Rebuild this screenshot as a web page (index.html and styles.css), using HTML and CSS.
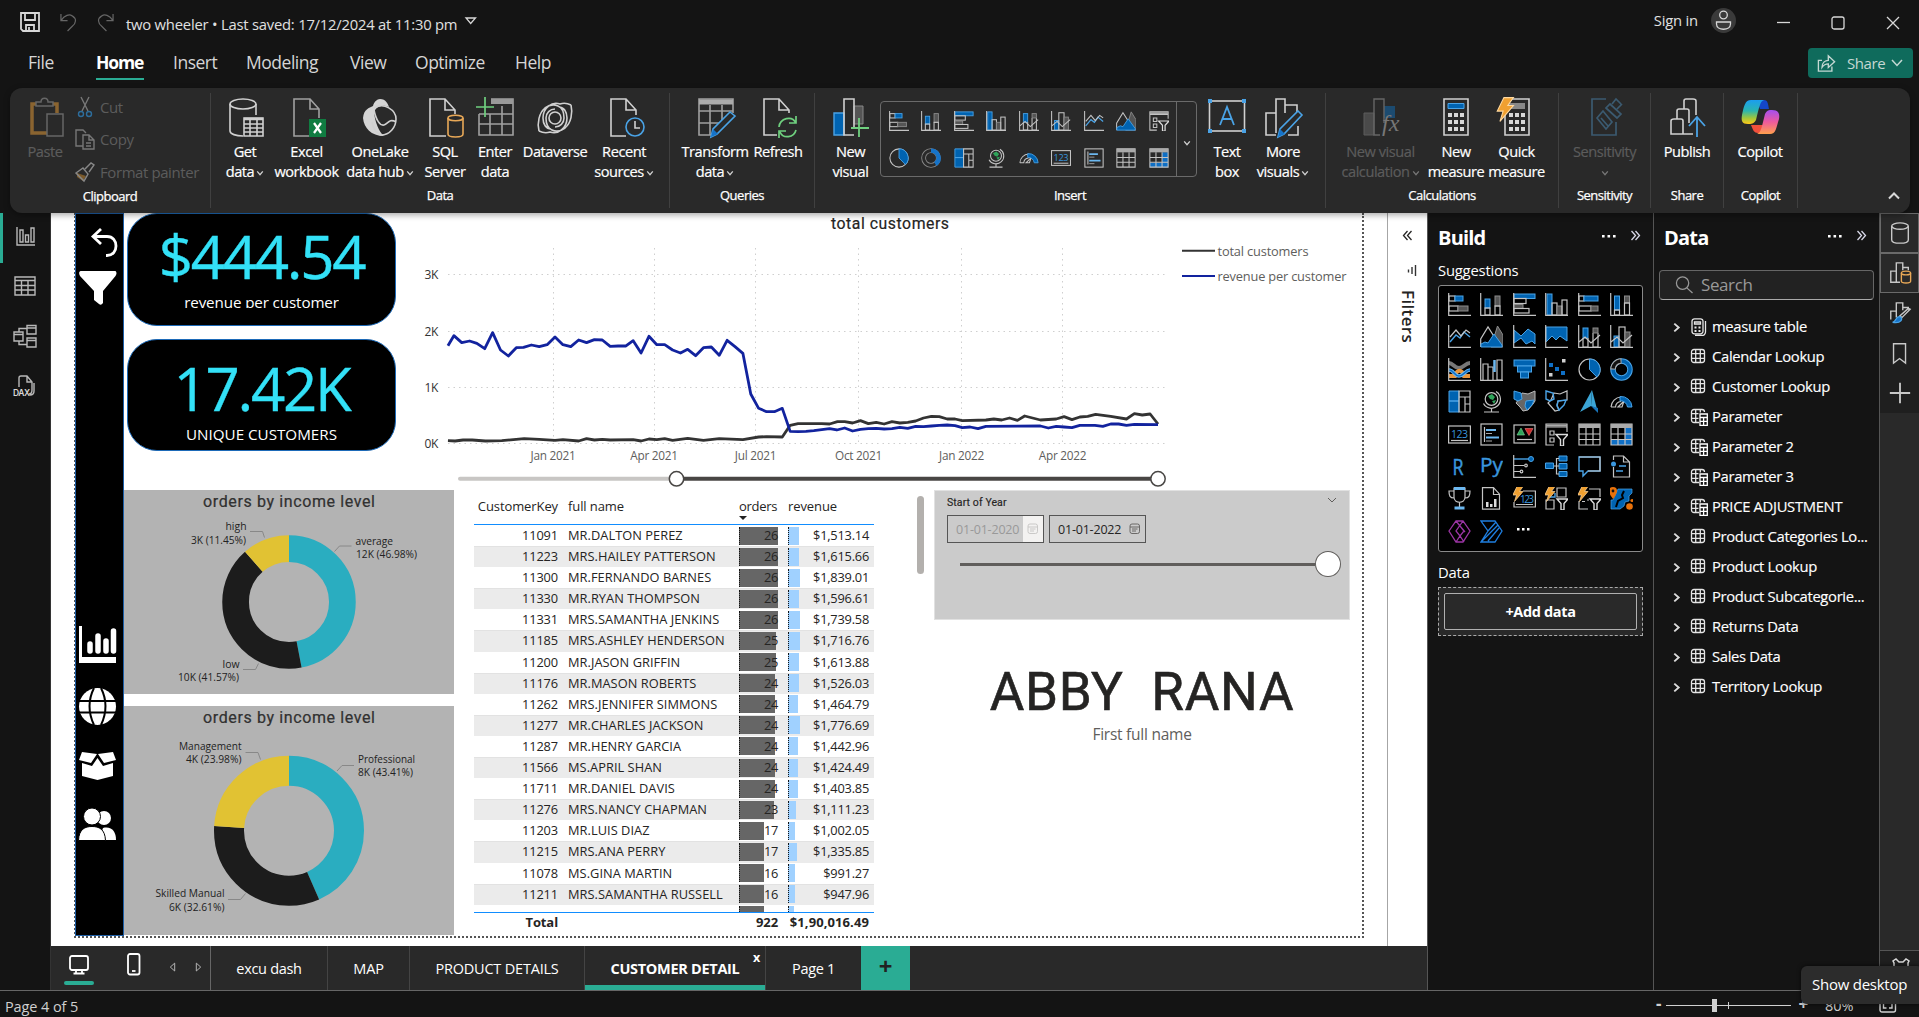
FILE: index.html
```html
<!DOCTYPE html>
<html lang="en">
<head>
<meta charset="utf-8">
<title>two wheeler</title>
<link rel="stylesheet" href="styles.css">
</head>
<body>
<svg class="defs" aria-hidden="true">
  <defs>
    <linearGradient id="cpA" x1="0" y1="0" x2="0" y2="1"><stop offset="0" stop-color="#1b9df0"/><stop offset=".45" stop-color="#2ab5b0"/><stop offset=".75" stop-color="#9fc63c"/><stop offset="1" stop-color="#ffc818"/></linearGradient>
    <linearGradient id="cpB" x1="0" y1="0" x2="0" y2="1"><stop offset="0" stop-color="#a44ff0"/><stop offset=".5" stop-color="#ee5a9d"/><stop offset="1" stop-color="#ffa04d"/></linearGradient>
  </defs>

  <symbol id="barStack" viewBox="0 0 23 23"><rect class="n" x="1" y="3" width="6" height="5"/><rect class="b" x="7" y="3" width="8" height="5"/><rect class="n" x="1" y="13" width="9" height="5"/><rect class="gf" x="10" y="13" width="10" height="5"/><path class="w" d="M.7 0v22.3H23"/></symbol>
  <symbol id="colStack" viewBox="0 0 23 23"><rect class="b" x="5" y="6" width="5" height="9"/><rect class="n" x="5" y="15" width="5" height="7"/><rect class="gf" x="15" y="3" width="5" height="10"/><rect class="n" x="15" y="13" width="5" height="9"/><path class="w" d="M.7 0v22.3H23"/></symbol>
  <symbol id="barClust" viewBox="0 0 23 23"><rect class="b" x="1" y="1" width="21" height="4.500"/><rect class="n" x="1" y="5.500" width="12" height="5"/><rect class="gf" x="1" y="11.500" width="9" height="4"/><rect class="n" x="1" y="15.500" width="15" height="4.500"/><path class="w" d="M.7 0v22.3H23"/></symbol>
  <symbol id="colClust" viewBox="0 0 23 23"><rect class="b" x="2" y="1" width="5" height="21"/><rect class="n" x="7" y="10" width="5" height="12"/><rect class="gf" x="12" y="13" width="5" height="9"/><rect class="n" x="17" y="7" width="5" height="15"/><path class="w" d="M.7 0v22.3H23"/></symbol>
  <symbol id="bar100" viewBox="0 0 23 23"><rect class="n" x="1" y="3" width="5" height="5"/><rect class="b" x="6" y="3" width="14" height="5"/><rect class="n" x="1" y="13" width="12" height="5"/><rect class="gf" x="13" y="13" width="7" height="5"/><path class="w" d="M.7 0v22.3H23"/></symbol>
  <symbol id="col100" viewBox="0 0 23 23"><rect class="b" x="4.500" y="3" width="5" height="14"/><rect class="n" x="4.500" y="17" width="5" height="5"/><rect class="gf" x="14.500" y="3" width="5" height="7"/><rect class="n" x="14.500" y="10" width="5" height="12"/><path class="w" d="M.7 0v22.3H23"/></symbol>
  <symbol id="line" viewBox="0 0 23 23"><path class="l" d="M2 17 8 10l4 3 4-6 6 5"/><path class="w" d="M2 12 8 5l5 6 5-6 4 3M.7 0v22.3H23"/></symbol>
  <symbol id="area" viewBox="0 0 23 23"><path class="gf" d="M11 22 17.500 1 23 10v12z"/><path class="n" d="M.7 22V14L8 2l7 11"/><path class="b" d="M1 22V19l4-2 3 1 6-9 8 11v2z"/></symbol>
  <symbol id="areaStack" viewBox="0 0 23 23"><path class="b" d="M1 5l7 6 7-7 7 5v10l-3-3-6 3-5-6-7 5z"/><path class="w" d="M.7 0v22.3H23"/></symbol>
  <symbol id="area100" viewBox="0 0 23 23"><path class="b" d="M1 2h21v14l-7-5-4 4-4-4-6 6z"/><path class="w" d="M.7 0v22.3H23"/></symbol>
  <symbol id="comboStack" viewBox="0 0 23 23"><rect class="b" x="5" y="3" width="5" height="10"/><path class="n" d="M5 13v9h5v-9M15 8v14h5V8"/><rect class="gf" x="15" y="3" width="5" height="5"/><path class="w" d="M1 17l6-5 6 6 9-8M.7 0v22.3H23"/></symbol>
  <symbol id="comboClust" viewBox="0 0 23 23"><rect class="b" x="4" y="11" width="5" height="11"/><rect class="n" x="9" y="2" width="6" height="20"/><rect class="gf" x="15" y="7" width="5" height="15"/><path class="w" d="M1 17l6-5 6 6 9-8M.7 0v22.3H23"/></symbol>
  <symbol id="ribbonC" viewBox="0 0 23 23"><path d="M1 5c4 0 5 5 10 5s6-5 11-5" fill="none" stroke="#777" stroke-width="4"/><path d="M1 18h6c2-7 7-7 9 0h6" fill="none" stroke="#e8963c" stroke-width="4"/><path d="M1 12c5 0 5 6 10 6s6-6 11-6" fill="none" stroke="#6cb8f0" stroke-width="3.500"/><path d="M1 12c5 0 5 6 10 6s6-6 11-6" fill="none" stroke="#0f6fc5" stroke-width="1.500"/><path class="w" d="M.7 0v22.3H23"/></symbol>
  <symbol id="waterfall" viewBox="0 0 23 23"><path class="n" d="M3 22V6h5v16M8 9h5v13M17 2h5v20h-5z"/><path d="M14.500 14V2" stroke="#6cb8f0" stroke-width="2.500"/><path class="w" d="M.7 0v22.3H23"/></symbol>
  <symbol id="funnelC" viewBox="0 0 23 23"><rect class="b" x="1" y="2" width="21" height="6"/><rect class="b" x="4.500" y="8" width="14" height="6"/><rect class="b" x="7.500" y="14" width="8" height="6"/></symbol>
  <symbol id="scatter" viewBox="0 0 23 23"><path fill="#0f6fc5" d="M4 5h4v4H4zM10 9h4v4h-4zM16 13h4v4h-4z"/><path fill="#d0d0d0" d="M17 1h3.500v3.500H17zM4 15h3.500v3.500H4z"/><path class="w" d="M.7 0v22.3H23"/></symbol>
  <symbol id="pie" viewBox="0 0 23 23"><circle class="w" cx="11.500" cy="11.500" r="10.500"/><path class="b" d="M11.500 1a10.500 10.500 0 0 1 7.400 18l-7.400-7.500z"/></symbol>
  <symbol id="donut" viewBox="0 0 23 23"><circle cx="11.500" cy="11.500" r="8.500" fill="none" stroke="#4aa3e6" stroke-width="5.500"/><circle cx="11.500" cy="11.500" r="8.500" fill="none" stroke="#0063b1" stroke-width="3.500"/><path d="M3 11.500A8.500 8.500 0 0 1 11.500 3" fill="none" stroke="#aaa" stroke-width="5.500"/><path d="M3 10.500A8.500 8.500 0 0 1 10.500 3" fill="none" stroke="#111" stroke-width="3.500"/></symbol>
  <symbol id="donutG" viewBox="0 0 23 23"><circle cx="11.500" cy="11.500" r="8.500" fill="none" stroke="#8a8a8a" stroke-width="5.500"/><circle cx="11.500" cy="11.500" r="8.500" fill="none" stroke="#292929" stroke-width="3.500"/><path d="M11.500 3a8.500 8.500 0 0 1 5 15.500" fill="none" stroke="#1673c8" stroke-width="5"/></symbol>
  <symbol id="treemap" viewBox="0 0 23 23"><path class="b" d="M1 1h10v10H1zM1 11h10v11H1z"/><path class="n" d="M11 1h11v6H11zM11 7h6v15h-6zM17 7h5v7h-5zM17 14h5v8h-5z"/></symbol>
  <symbol id="globe" viewBox="0 0 23 23"><circle class="w" cx="11.500" cy="9" r="6.300"/><path fill="#2fa35a" d="M8 6l4-2 3 3-2 3-3-1zM12 11l4-1-2 4z"/><path class="w" d="M16 1.500a9 9 0 1 1-12.500 12M11.500 18v4M4 22h15"/></symbol>
  <symbol id="mapFill" viewBox="0 0 23 23"><path fill="#666" stroke="#bbb" d="M9 3l6 1 7-3v10l-2 3-5 6-5 1-3-4-4-4 3-4z"/><path class="b" d="M1 1l7 2 1 6-4 2-4-2zM13 11l8-1-2 5-5 5-2-4z"/></symbol>
  <symbol id="mapLine" viewBox="0 0 23 23"><path class="w" d="M9 3l6 1 7-3v9l-9 1-1 4 2 5-4 1-7-8 3-3z"/><path class="l" d="M1 1l7 2 1 6-4 2-4-2zM13 11l8-1-2 5-5 5-2-4z"/></symbol>
  <symbol id="azure" viewBox="0 0 23 23"><path fill="#3ba5d6" d="M14 0 2 22l11-6z"/><path fill="#3ba5d6" d="M14 0l5 19-6-3z"/><path fill="#1873b8" d="M13 16l7 2v5z"/></symbol>
  <symbol id="gauge" viewBox="0 0 23 23"><path class="w" d="M1 17a10.500 10.500 0 0 1 10-10M1 17h4.500A6 6 0 0 1 11 11.500M8 17l2-2 4-4-2 6z"/><path class="b" d="M10 6.500a11 11 0 0 1 12 10.500h-4.500A7 7 0 0 0 10 10.800z"/></symbol>
  <symbol id="card" viewBox="0 0 23 23"><rect class="w" x=".6" y="3" width="21.800" height="17"/><path class="w" d="M3 17.500h17"/><text x="3" y="15" font-size="10.500" fill="#3a96dd" font-family="Open Sans, sans-serif" textLength="17">123</text></symbol>
  <symbol id="multi" viewBox="0 0 23 23"><rect class="w" x="1" y="1" width="21" height="21"/><path class="w" d="M4.500 4v15"/><path stroke="#6cb8f0" stroke-width="2.200" d="M6 7h10M6 14.500h13"/><path stroke="#aaa" d="M6 10.500h6M6 18h6"/></symbol>
  <symbol id="kpi" viewBox="0 0 23 23"><rect class="w" x="1" y="2" width="21" height="18"/><path fill="#2fa35a" stroke="#7fd79a" stroke-width=".6" d="M4 12l4-7 3.500 7z"/><path fill="#d12a2a" stroke="#f08080" stroke-width=".6" d="M12 5.500h8l-4 7z"/><path class="w" d="M4 16.500h15"/></symbol>
  <symbol id="slicer" viewBox="0 0 23 23"><path class="w" d="M9 22H1V1h21v8M1 4h21M5 8h4v4H5zM5 15h4v4H5z"/><path fill="none" stroke="#ddd" stroke-width="1.400" d="M11 11.500h12l-4.500 5V23h-3v-6.500z"/><path stroke="#aaa" stroke-width="2" d="M1 2.500h21"/></symbol>
  <symbol id="table" viewBox="0 0 23 23"><path class="w" d="M1 1h21v21H1zM8 5v17M15 5v17M1 11h21M1 16.500h21"/><path stroke="#aaa" stroke-width="4" d="M1 3h21"/></symbol>
  <symbol id="matrix" viewBox="0 0 23 23"><path fill="#0f6fc5" d="M15 5h7v17H1v-5h14z"/><path class="w" d="M1 1h21v21H1zM8 5v17M15 5v17M1 11h21M1 16.500h21"/><path stroke="#aaa" stroke-width="4" d="M1 3h21"/></symbol>
  <symbol id="rvis" viewBox="0 0 23 23"><text x="4.500" y="20" font-size="21" fill="#3a96dd" stroke="#3a96dd" stroke-width=".5" font-family="Open Sans, sans-serif" textLength="11" lengthAdjust="spacingAndGlyphs">R</text></symbol>
  <symbol id="pyvis" viewBox="0 0 23 23"><text x="0" y="17" font-size="20" fill="#3a96dd" stroke="#3a96dd" stroke-width=".4" font-family="Open Sans, sans-serif" textLength="23" lengthAdjust="spacingAndGlyphs">Py</text></symbol>
  <symbol id="keyInf" viewBox="0 0 23 23"><path class="l" d="M1 4h15"/><circle class="b" cx="18" cy="4" r="2.500"/><path class="w" d="M1 10.500h10M1 16.500h6M.7 0v22.3H23"/><circle class="w" cx="13" cy="10.500" r="1.300"/><circle class="w" cx="8.500" cy="16.500" r="1.300"/></symbol>
  <symbol id="decomp" viewBox="0 0 23 23"><path class="b" d="M.5 8h8v5.500h-8zM14 1h8v5h-8zM14 8.500h8V14h-8zM14 16.500h8v5h-8z"/><path class="w" d="M9 11h5M14 3.500h-2.500v15.500H14"/></symbol>
  <symbol id="qna" viewBox="0 0 23 23"><path class="l" d="M1 2h21v14H10l-5 5v-5H1z"/><path class="w" d="M10 16H22V2H1"/></symbol>
  <symbol id="narr" viewBox="0 0 23 23"><path class="w" d="M3.500 5V1h10l6 6v15h-16V12M13.500 1v6h6"/><path class="l" d="M9 11h7M6 16h7"/><circle fill="#3a96dd" cx="3.500" cy="9" r="2.500"/></symbol>
  <symbol id="trophy" viewBox="0 0 23 23"><path class="w" d="M6 1h11v9c0 7-11 7-11 0zM6 4H1c0 5 1 7 5 7M17 4h5c0 5-1 7-5 7M11.500 15v5"/><path fill="#6cb8f0" d="M6 0h11v3H6zM6.500 19.500h10V22.500h-10z"/></symbol>
  <symbol id="pagrep" viewBox="0 0 23 23"><path class="w" stroke-width="1.600" d="M2.500.7h11l6 6.500v15h-17zM13.500 1v6.500h6"/><path fill="#ddd" d="M6 15h2.500v5H6zM10 17h2.500v3H10zM14 12h2.500v8H14z"/></symbol>
  <symbol id="bolt" viewBox="0 0 12 16"><path fill="#f0a030" stroke="#ffd9a0" stroke-width=".7" d="M5 .5h6L7.500 5.500H11L2.500 15.500l2-6.500H.8z"/></symbol>
  <symbol id="boltCard" viewBox="0 0 23 23"><path class="w" d="M10 4h12.400v16H1v-5M3 17.500h17"/><text x="7" y="16" font-size="10" fill="#3a96dd" font-family="Open Sans, sans-serif" textLength="14">123</text><use href="#bolt" x="-1" y="-1" width="12" height="16"/></symbol>
  <symbol id="boltSlice" viewBox="0 0 23 23"><path class="w" d="M12 1h9v9h-9zM1 13h8v9H1z"/><path class="l" d="M10 6v4H5"/><path fill="none" stroke="#ddd" stroke-width="1.400" d="M12 12h11l-4 4.500V23h-3v-6.500z"/><use href="#bolt" x="-1" y="-1" width="12" height="16"/></symbol>
  <symbol id="boltList" viewBox="0 0 23 23"><path class="w" d="M11 2h11v8M1 14v8h9M4 14.500h3M9 13h2"/><path fill="none" stroke="#ddd" stroke-width="1.400" d="M12 12h11l-4 4.500V23h-3v-6.500z"/><use href="#bolt" x="-1" y="-1" width="12" height="16"/></symbol>
  <symbol id="arc" viewBox="0 0 23 23"><path fill="#0063b1" stroke="#4aa3e6" stroke-width=".7" d="M8 2h14v4l-3 3v5l-4 1-1 4-4 3H1V13h2z"/><path fill="none" stroke="#000" stroke-width="2" d="M14 4l-2 4 1 3-5 3-2 6"/><path fill="#e8710a" d="M3 0a4 4 0 0 1 4 4c0 3-4 8-4 8s-4-5-4-8a4 4 0 0 1 4-4z"/><circle fill="#111" cx="3" cy="4" r="1.400"/><circle fill="#e8710a" cx="19.500" cy="19.500" r="3.300"/><circle fill="#e8710a" cx="22" cy="13.500" r="1.600"/></symbol>
  <symbol id="papps" viewBox="0 0 23 23"><path fill="none" stroke="#9c35a5" stroke-width="1.300" d="M1 11 8 1h7l7 10-7 11H8zM8 1l8 10-4 5-4-5 7-10M12 6l5 6M8 22l4-6 4 6"/></symbol>
  <symbol id="pauto" viewBox="0 0 23 23"><path fill="none" stroke="#1f7fe0" stroke-width="1.300" d="M1 1h14l7 10-7 11H1l7-11zM8 11l8-9M2 21 18 5M8 21l11-13"/></symbol>
  <symbol id="more" viewBox="0 0 23 23"><path fill="#fff" d="M4 8h2.500v2.500H4zM9 8h2.500v2.500H9zM14 8h2.500v2.500H14z"/></symbol>

  <symbol id="tbl" viewBox="0 0 18 18"><path fill="none" stroke="#e6e6e6" stroke-width="1.300" d="M4 1.500h8a2.500 2.500 0 0 1 2.500 2.500v8a2.500 2.500 0 0 1-2.500 2.500H4A2.500 2.500 0 0 1 1.500 12V4A2.500 2.500 0 0 1 4 1.500zM5.700 1.500v13M10.300 1.500v13M1.500 5.700h13M1.500 10.300h13"/></symbol>
  <symbol id="tblCalc" viewBox="0 0 18 18"><path fill="none" stroke="#e6e6e6" stroke-width="1.300" d="M9 14.500H4A2.500 2.500 0 0 1 1.500 12V4A2.500 2.500 0 0 1 4 1.500h8A2.500 2.500 0 0 1 14.500 4M5.700 1.500v13M10.300 1.500v3M1.500 5.700h7M1.500 10.300h7"/><path fill="#141414" stroke="#fff" stroke-width="1.300" d="M10 6h7.300v11.300H10zM10 9.500h7.300M10 13.300h7.300M13.600 9.500v8"/></symbol>
  <symbol id="meas" viewBox="0 0 18 18"><path fill="none" stroke="#e6e6e6" stroke-width="1.300" d="M4.500.8h6A2.500 2.500 0 0 1 13 3.300v10a2.500 2.500 0 0 1-2.500 2.500h-6A2.500 2.500 0 0 1 2 13.300v-10A2.500 2.500 0 0 1 4.500.8zM4.500 4h6v2h-6zM15.500 3v11a3.500 3.500 0 0 1-3.500 3.500H5"/><path fill="#e6e6e6" d="M4.500 8.500h2v2h-2zM8.500 8.500h2v2h-2zM4.500 12h2v2h-2zM8.500 12h2v2h-2z"/></symbol>
  <symbol id="chev" viewBox="0 0 10 10"><path fill="none" stroke="currentColor" stroke-width="1.700" d="M1.500 3l3.500 4 3.500-4"/></symbol>
  <symbol id="dblR" viewBox="0 0 11 11"><path fill="none" stroke="currentColor" stroke-width="1.300" d="M1.500 1l4 4.500-4 4.500M5.500 1l4 4.500-4 4.500"/></symbol>
  <symbol id="dots3" viewBox="0 0 14 4"><path fill="#fff" d="M0 1h2.600v2.400H0zM5.500 1h2.600v2.400H5.500zM11 1h2.600v2.400H11z"/></symbol>
</svg>

<header class="titlebar">
  <svg class="tb-save" viewBox="0 0 20 20"><path d="M1 1h18v18H3l-2-2zM5 1v7h10V1M6 19v-6h8v6M9 15v3" /></svg>
  <svg class="tb-undo" viewBox="0 0 18 20"><path d="M1 1v7h7M1 8C5 2 10 1 13 3c5 3 4 8 0 11l-5 5"/></svg>
  <svg class="tb-undo tb-redo" viewBox="0 0 18 20"><path d="M17 1v7h-7M17 8C13 2 8 1 5 3c-5 3-4 8 0 11l5 5"/></svg>
  <span class="doc-name">two wheeler • Last saved: 17/12/2024 at 11:30 pm</span>
  <svg class="tb-drop" viewBox="0 0 12 8"><path d="M1 1h9.500L5.700 6.500z"/></svg>
  <span class="signin">Sign in</span>
  <svg class="avatar" viewBox="0 0 25 25"><circle class="disc" cx="12.500" cy="12.500" r="12.500"/><circle cx="12.500" cy="7" r="3.800"/><path d="M5.500 14h14v2c0 7-14 7-14 0z"/></svg>
  <svg class="win win-min" viewBox="0 0 14 14"><path d="M0 6.500h13"/></svg>
  <svg class="win win-max" viewBox="0 0 14 14"><rect x="1" y="1" width="12" height="12" rx="2"/></svg>
  <svg class="win win-close" viewBox="0 0 14 14"><path d="M1 1l12 12M13 1 1 13"/></svg>
</header>

<nav class="menubar">
  <a class="m-file">File</a><a class="m-home on">Home</a><a class="m-insert">Insert</a><a class="m-model">Modeling</a><a class="m-view">View</a><a class="m-opt">Optimize</a><a class="m-help">Help</a>
  <button class="share"><svg class="share-ico" viewBox="0 0 20 20"><path d="M5 7H1v12h15v-5M5 15c0-6 4-8 7-8V2l7 6.500L12 15v-4c-3 0-5 1-7 4z"/></svg>Share<svg class="share-ch" viewBox="0 0 12 8"><path d="M1 1l5 5.500L11 1"/></svg></button>
</nav>

<section class="ribbon">
  <div class="group g-clip">
    <div class="tools">
      <div class="btn off b-paste"><svg viewBox="0 0 38 42"><path fill="none" stroke="#8a6430" stroke-width="3.500" d="M10 8H4v29h16M24 8h5v9"/><path fill="#292929" stroke="#666" stroke-width="1.500" d="M8 10V6h5c0-5 7-5 7 0h5v4zM19 18h16v22H19z"/></svg><b>Paste</b></div>
      <ul class="clip-list">
        <li><svg viewBox="0 0 20 20"><path stroke="#777" d="M6 0l7 14M14 0 7 14"/><circle cx="6" cy="17" r="2.500" stroke="#2d6d9c"/><circle cx="14" cy="17" r="2.500" stroke="#2d6d9c"/></svg>Cut</li>
        <li><svg viewBox="0 0 20 20"><path stroke="#777" d="M8 17H1V1h7l3 3M8 6h6l5 5v9H8zM14 6v5h5M11 14h5M11 17h5"/></svg>Copy</li>
        <li><svg viewBox="0 0 20 20"><path fill="#7b5a2b" d="M2 11l9 3-3 5-6-4z"/><path stroke="#888" d="M1 11 8 6l5 6-4 7zM10 7l6-6 3 2-5 7"/></svg>Format painter</li>
      </ul>
    </div>
    <h6>Clipboard</h6>
  </div>
  <div class="group g-data">
    <div class="tools">
      <div class="btn w56"><svg viewBox="0 0 38 42"><g class="o"><ellipse cx="17" cy="8" rx="13" ry="5"/><path d="M4 8v27c0 3 6 5 13 5M30 8v11"/><path fill="#292929" d="M18 22h19v18H18zM18 28h19M18 32h19M18 36h19M24 24v16M31 24v16"/><path stroke-width="2.500" d="M18 23h19"/></g></svg><b>Get<br>data<svg class="ch"><use href="#chev"/></svg></b></div>
      <div class="btn w67"><svg viewBox="0 0 38 42"><path class="o dimline" d="M21 40H6V3h16l9 10v9M22 3v10h9"/><path fill="#107c41" d="M21 23h17v18H21z"/><path stroke="#fff" stroke-width="2.200" d="M26 27l7 10M33 27l-7 10"/></svg><b>Excel<br>workbook</b></div>
      <div class="btn w80"><svg viewBox="0 0 38 42"><path fill="#d4d4d4" d="M19 3c6 0 8 5 9 8-9-4-14 2-15 5 1 10 5 20 10 24C10 40 3 32 2 22 3 13 8 12 12 10c1-4 4-7 7-7z"/><path class="o" d="M13 12c10-6 22 2 22 11 0 8-6 16-15 16M13 14c2 10 6 16 10 15s5-7 12-3M20 39c-5-2-8-7-9-13"/></svg><b>OneLake<br>data hub<svg class="ch"><use href="#chev"/></svg></b></div>
      <div class="btn w50"><svg viewBox="0 0 38 42"><path class="o" d="M20 40H4V3h15l10 11v4M19 3v11h10"/><g fill="#292929" stroke="#e8a857" stroke-width="1.600"><path d="M22 22v16c0 4 15 4 15 0V22"/><ellipse cx="29.500" cy="22" rx="7.500" ry="2.800"/></g></svg><b>SQL<br>Server</b></div>
      <div class="btn w50"><svg viewBox="0 0 38 42"><path class="o dimline" d="M3 18v21h34V3H15M3 28h34M3 18h34M14 18v21M26 10v29"/><path stroke="#999" stroke-width="5" d="M15 5.500h22"/><path stroke="#6fd07f" stroke-width="1.700" d="M9 1v20M0 11h18"/></svg><b>Enter<br>data</b></div>
      <div class="btn w70"><svg viewBox="0 0 38 42"><g class="o"><circle cx="19" cy="22" r="6"/><path d="M35 9c-4-2-8-2-11-1-8-3-17 4-17 14 0 6 3 11 8 11M3 35c4 2 8 2 11 1 8 3 17-4 17-14 0-6-3-11-8-11M35 9c2 8 0 18-6 23-4 3-9 4-13 2-5-2-6-8-6-12 0-5 4-9 9-9M3 35C1 27 3 17 9 12c4-3 9-4 13-2 5 2 6 8 6 12 0 5-4 9-9 9"/></g></svg><b>Dataverse</b></div>
      <div class="btn w68"><svg viewBox="0 0 38 42"><path class="o" d="M21 40H6V3h15l10 11v5M21 3v11h10"/><circle cx="30" cy="31" r="9" fill="#292929" stroke="#4aa3e6" stroke-width="1.600"/><path class="o" d="M30 25v7h5"/></svg><b>Recent<br>sources<svg class="ch"><use href="#chev"/></svg></b></div>
    </div>
    <h6>Data</h6>
  </div>
  <div class="group g-query">
    <div class="tools">
      <div class="btn w68"><svg viewBox="0 0 38 42"><path class="o dimline" d="M17 39H3V3h34v14M3 15h34M3 27h20M14 9v30M26 9v16"/><path stroke="#aaa" stroke-width="5" d="M3 6h34"/><path fill="#292929" stroke="#4aa3e6" stroke-width="1.600" d="M34 16l5 4-18 18-6 3 2-8z"/><path fill="#1673c8" d="M15 41l2-8 5 5z"/></svg><b>Transform<br>data<svg class="ch"><use href="#chev"/></svg></b></div>
      <div class="btn w58"><svg viewBox="0 0 38 42"><path class="o" d="M18 39H5V3h15l10 11v3M20 3v11h10"/><path fill="none" stroke="#6fd07f" stroke-width="1.700" d="M20 31c1-9 13-12 17-4M37 20v7h-7M37 34c-2 8-13 9-16 2M20 42v-7h7"/></svg><b>Refresh</b></div>
    </div>
    <h6>Queries</h6>
  </div>
  <div class="group g-insert">
    <div class="tools">
      <div class="btn w57"><svg viewBox="0 0 38 42"><path fill="#0063b1" stroke="#4aa3e6" stroke-width="1.400" d="M2 17h10v22H2z"/><path fill="#555" stroke="#888" d="M22 10h9v18h-9z"/><path class="o" d="M22 39H12V3h10v29"/><path stroke="#6fd07f" stroke-width="1.800" d="M27 22v19M19 32h18"/></svg><b>New<br>visual</b></div>
      <div class="gallery"><div class="gal-grid" id="gallery"></div><div class="gal-drop"><svg class="ch"><use href="#chev"/></svg></div></div>
      <div class="btn w50 after-gal"><svg viewBox="0 0 38 42"><rect class="o" x="1.500" y="5" width="35" height="30"/><path fill="#4aa3e6" d="M0 3h4v4H0zM34 3h4v4h-4zM0 33h4v4H0zM34 33h4v4h-4z"/><path fill="none" stroke="#4aa3e6" stroke-width="1.800" d="M12 29l7-18 7 18M14.500 23h9"/></svg><b>Text<br>box</b></div>
      <div class="btn w62"><svg viewBox="0 0 38 42"><path class="o" d="M12 39H2V17h10M12 37V3h9v14M21 9h12v7M34 30v9H24"/><path fill="#292929" stroke="#4aa3e6" stroke-width="1.600" d="M34 15l4 4-18 19-6 3 2-8z"/><path fill="#1673c8" d="M14 41l2-8 5 5z"/></svg><b>More<br>visuals<svg class="ch"><use href="#chev"/></svg></b></div>
    </div>
    <h6>Insert</h6>
  </div>
  <div class="group g-calc">
    <div class="tools">
      <div class="btn w90 off"><svg viewBox="0 0 38 42"><path fill="#4a4a4a" stroke="#5c5c5c" d="M2 17h10v22H2z"/><path fill="#1c4b70" d="M22 10h11v12H22z"/><path fill="none" stroke="#666" stroke-width="1.400" d="M18 39h-6V3h10v24"/><text x="20" y="35" font-size="24" font-style="italic" font-family="Liberation Serif, serif" fill="#777">fx</text></svg><b>New visual<br>calculation<svg class="ch"><use href="#chev"/></svg></b></div>
      <div class="btn w60"><svg viewBox="0 0 38 42"><use href="#calcu"/><path fill="#0063b1" stroke="#4aa3e6" d="M11 7.500h16v5H11z"/></svg><b>New<br>measure</b></div>
      <div class="btn w61"><svg viewBox="0 0 38 42"><g id="calcu"><path class="o" d="M7 3h24v36H7z"/><path fill="#888" d="M11 7h16v6H11z"/><path fill="#d8d8d8" d="M11 17h4v4h-4zM17 17h4v4h-4zM23 17h4v4h-4zM11 24h4v4h-4zM17 24h4v4h-4zM23 24h4v4h-4zM11 31h4v4h-4zM17 31h4v4h-4zM23 31h4v4h-4z"/></g><use href="#bolt" x="-2" y="0" width="19" height="27"/></svg><b>Quick<br>measure</b></div>
    </div>
    <h6>Calculations</h6>
  </div>
  <div class="group g-sens">
    <div class="tools"><div class="btn w90 off"><svg viewBox="0 0 38 42"><path fill="none" stroke="#3b5a70" stroke-width="1.700" d="M20 3H6v36h24V26M11 22l6-7 9 11-6 7zM15 22l7 8M20 12l11 10 4-4-11-10zM26 8l4-5 5 5M31 13l5-5"/></svg><b>Sensitivity<br><svg class="ch"><use href="#chev"/></svg></b></div></div>
    <h6>Sensitivity</h6>
  </div>
  <div class="group g-share">
    <div class="tools"><div class="btn w70"><svg viewBox="0 0 38 42"><path class="o" d="M25 38H3V25q0-2 3-2h7q2 0 2 2v13M9 23V15q0-2 2-2h8q2 0 2 2v12M16 13V5q0-2 2-2h7q3 0 3 2v14"/><path fill="none" stroke="#4aa3e6" stroke-width="1.800" d="M29 41V21M21 30l8-9 8 9"/></svg><b>Publish</b></div></div>
    <h6>Share</h6>
  </div>
  <div class="group g-cop">
    <div class="tools"><div class="btn w70"><svg viewBox="0 0 38 42"><path fill="#1447c8" d="M16 4h7c4 0 4 4 5 9h-9z"/><path fill="#f0503c" d="M10 29h12l-2 8h-3c-4 0-5-3-7-8z"/><path fill="url(#cpA)" d="M10 4h13c-4 1-5 8-8 20-2 4-5 4-8 4-6 0-7-3-6-9C3 10 4 4 10 4z"/><path fill="url(#cpB)" d="M29 38H16c4-1 5-8 8-20 2-4 4-4 7-4 6 0 8 3 7 9-3 9-3 15-9 15z"/></svg><b>Copilot</b></div></div>
    <h6>Copilot</h6>
  </div>
  <svg class="collapse" viewBox="0 0 12 8"><path d="M1 6.500 6 1.500l5 5"/></svg>
</section>

<main class="body">
  <aside class="viewrail">
    <i class="active-bar"></i>
    <svg viewBox="0 0 24 24"><path d="M4 3v18h18M7 6h3v12H7zM12.500 11h3v7h-3zM18 4h3v14h-3z"/></svg>
    <svg viewBox="0 0 24 24"><path d="M2 3h20v18H2zM2 6.500h20M2 11.500h20M2 16h20M8.500 6.500V21M15 6.500V21"/></svg>
    <svg viewBox="0 0 24 24"><path d="M1 8h9v9H1zM1 10.500h9M14 1.500h9V10h-9zM14 4h9M14 14h9v9h-9zM14 16.500h9M6 8V4.500h8M6 17v3.500h8"/></svg>
    <svg viewBox="0 0 24 24"><path d="M6 13V4q0-2 2-2h6l5 6v8q0 4-3 4M14 2v6h5M21 9v8q0 4-4 4"/><text x="0" y="21.500" font-size="8.500" font-family="Inter, sans-serif" textLength="17">DAX</text></svg>
  </aside>

  <div class="centre">
    <div class="stage">
      <div class="page">
        <div class="strip">
          <svg class="s-back" viewBox="0 0 28 30"><path d="M11 2 3 9.500l8 7.500M3 9.500h14c12 0 12 19 0 19h-1"/></svg>
          <svg class="s-filter" viewBox="0 0 38 34"><path d="M1.500 0h35q2 2 0 5L24 20v12q-2 3-4 1l-5-4v-9L1 5Q-1 1 1.500 0z"/></svg>
          <svg class="s-chart" viewBox="0 0 37 37"><path d="M0 0h3v31h34v6H0z"/><path d="M11 18v7M19 10v15M27 15v10M34.500 5v20" stroke="#fff" stroke-width="5.500" stroke-linecap="round"/></svg>
          <svg class="s-globe" viewBox="0 0 37 37"><circle cx="18.500" cy="18.500" r="18.500"/><path d="M0 13h37M0 24.500h37M15 0Q6 18 15 37M22 0q9 18 0 37" fill="none" stroke="#000" stroke-width="2"/></svg>
          <svg class="s-box" viewBox="0 0 37 28"><path d="M3 0l15 2L12 11 0 8zM34 0 19 2l6 9 12-3zM3 11l10 3 5.500-8 5.500 8 10-3v13l-15.500 4L3 24z"/></svg>
          <svg class="s-users" viewBox="0 0 37 31"><circle cx="25" cy="9" r="7"/><path d="M24 19c9-2 13 4 13 12H20z"/><circle cx="13" cy="7.500" r="8.500" stroke="#000"/><path stroke="#000" d="M-.5 31.500C0 20 6 17.500 13 17.500S26 20 26.500 31.500z"/></svg>
        </div>
        <div class="visuals">
          <div class="row-top">
            <div class="cards">
              <div class="kpi"><strong>$444.54</strong><em>revenue per customer</em></div>
              <div class="kpi two"><strong>17.42K</strong><em>UNIQUE CUSTOMERS</em></div>
            </div>
            <svg class="trend" viewBox="400 213 962 277">
              <g class="grid"><path d="M448 274.500h720M448 331.500h720M448 387.500h720M448 443.500h720M553.500 248v195M654.500 248v195M755.500 248v195M858.500 248v195M961.500 248v195M1062.500 248v195"/></g>
              <text class="ttl" x="831" y="229" textLength="118">total customers</text>
              <g class="yl"><text x="438" y="279">3K</text><text x="438" y="335.500">2K</text><text x="438" y="391.500">1K</text><text x="438" y="448">0K</text></g>
              <g class="xl"><text x="553" y="460">Jan 2021</text><text x="654" y="460">Apr 2021</text><text x="755.500" y="460">Jul 2021</text><text x="858.500" y="460">Oct 2021</text><text x="961.500" y="460">Jan 2022</text><text x="1062.500" y="460">Apr 2022</text></g>
              <g transform="translate(400 200) scale(.65686 .33333)" class="series">
                <polyline stroke="#333" points="73,722 84,723 96,720 110,720 130,723 155,722 189,716 212,718 236,721 248,719 272,723 284,716 296,720 308,718 320,720 355,719 367,723 379,717 391,719 403,716 415,721 438,715 462,721 486,716 522,719 546,711 558,710 582,711 594,676 606,671 642,671 654,672 666,665 677,665 689,669 701,662 713,671 725,667 737,672 749,665 761,669 773,667 785,663 797,654 809,649 821,650 833,657 845,657 856,662 892,660 904,657 916,660 928,654 940,661 951,648 975,660 999,657 1011,650 1023,659 1035,651 1047,649 1059,643 1082,649 1106,657 1118,641 1130,645 1142,642 1154,672"/>
                <polyline stroke="#12239e" points="73,437 82,407 94,428 106,423 117,430 129,446 141,398 153,450 165,468 177,443 188,442 200,435 212,440 224,434 236,411 248,434 260,440 272,420 284,428 296,419 308,420 320,439 332,438 344,438 355,422 367,459 379,409 391,434 403,434 415,450 427,459 438,448 450,467 462,443 474,441 486,466 498,421 510,440 522,460 534,582 546,625 558,635 570,635 582,625 594,694 606,695 618,694 630,692 642,689 654,686 665,690 677,684 689,693 701,688 713,686 725,685 737,687 749,686 761,682 773,685 785,679 797,680 809,678 821,676 833,675 845,677 856,683 868,681 880,686 892,679 975,678 987,684 999,679 1011,681 1023,683 1035,676 1058,676 1070,679 1082,672 1094,672 1106,676 1118,673 1154,674"/>
              </g>
              <path d="M1182 250.700h33" stroke="#333" stroke-width="2"/><path d="M1182 276h33" stroke="#12239e" stroke-width="2"/>
              <text class="lg" x="1217.500" y="256" textLength="91">total customers</text><text class="lg" x="1217.500" y="281" textLength="129">revenue per customer</text>
              <path d="M460 478.800h216" stroke="#c8c6c4" stroke-width="4" stroke-linecap="round"/><path d="M676 478.800h482" stroke="#484644" stroke-width="4"/>
              <g fill="#fff" stroke="#484644" stroke-width="1.500"><circle cx="676.500" cy="478.800" r="7.200"/><circle cx="1158" cy="478.800" r="7.200"/></g>
            </svg>
          </div>
          <div class="row-bottom">
            <div class="donuts">
              <svg class="donut-1" viewBox="124 490 330 204">
                <text class="ttl" x="203" y="507" textLength="172">orders by income level</text>
                <g transform="rotate(-90 289 602)" fill="none" stroke-width="26.700"><circle cx="289" cy="602" r="53.400" stroke="#2aadc0" pathLength="100" stroke-dasharray="46.980 100"/><circle cx="289" cy="602" r="53.400" stroke="#1c1c1c" pathLength="100" stroke-dasharray="41.570 100" stroke-dashoffset="-46.980"/><circle cx="289" cy="602" r="53.400" stroke="#e1c233" pathLength="100" stroke-dasharray="11.450 100" stroke-dashoffset="-88.550"/></g>
                <path class="lead" d="M250 531.500h12.500l2 6M334.500 551.500l5-5.500h12M243 669.500h12.500l3-6"/>
                <g class="dl"><text x="225.500" y="529.500" textLength="21" lengthAdjust="spacingAndGlyphs">high</text><text x="191" y="543.500" textLength="55" lengthAdjust="spacingAndGlyphs">3K (11.45%)</text><text x="355.500" y="544.500" textLength="37.500" lengthAdjust="spacingAndGlyphs">average</text><text x="356" y="557.500" textLength="61" lengthAdjust="spacingAndGlyphs">12K (46.98%)</text><text x="222.500" y="667.500" textLength="17" lengthAdjust="spacingAndGlyphs">low</text><text x="178" y="680.500" textLength="61" lengthAdjust="spacingAndGlyphs">10K (41.57%)</text></g>
              </svg>
              <svg class="donut-2" viewBox="124 706 330 229">
                <text class="ttl" x="203" y="722.500" textLength="172">orders by income level</text>
                <g transform="rotate(-90 289 830.700)" fill="none" stroke-width="30"><circle cx="289" cy="830.700" r="60" stroke="#2aadc0" pathLength="100" stroke-dasharray="43.410 100"/><circle cx="289" cy="830.700" r="60" stroke="#1c1c1c" pathLength="100" stroke-dasharray="32.610 100" stroke-dashoffset="-43.410"/><circle cx="289" cy="830.700" r="60" stroke="#e1c233" pathLength="100" stroke-dasharray="23.980 100" stroke-dashoffset="-76.020"/></g>
                <path class="lead" d="M245.500 752.500h12.500l2.500 7M337 771l5-5.500h12M228 899.500h12.500l5-6"/>
                <g class="dl"><text x="179" y="750" textLength="62.500" lengthAdjust="spacingAndGlyphs">Management</text><text x="186" y="763" textLength="55.500" lengthAdjust="spacingAndGlyphs">4K (23.98%)</text><text x="358" y="763" textLength="57" lengthAdjust="spacingAndGlyphs">Professional</text><text x="358" y="776" textLength="55" lengthAdjust="spacingAndGlyphs">8K (43.41%)</text><text x="155.500" y="897" textLength="69" lengthAdjust="spacingAndGlyphs">Skilled Manual</text><text x="169" y="911" textLength="55.500" lengthAdjust="spacingAndGlyphs">6K (32.61%)</text></g>
              </svg>
            </div>
            <div class="tablewrap">
              <div class="thead"><span class="c-key">CustomerKey</span><span class="c-name">full name</span><span class="c-ord">orders<i class="sort"></i></span><span class="c-rev">revenue</span></div>
              <div class="tbody" id="rows"></div>
              <div class="tfoot"><span class="c-key">Total</span><span class="c-name"></span><span class="c-ord">922</span><span class="c-rev">$1,90,016.49</span></div>
            </div>
            <div class="vscroll"></div>
            <div class="rightcol">
              <div class="slicer">
                <div class="sl-head"><span>Start of Year</span><svg viewBox="0 0 10 7"><path d="M1 1l4 4 4-4"/></svg></div>
                <div class="sl-inputs">
                  <div class="date dim"><span>01-01-2020</span><i><svg viewBox="0 0 12 12"><use href="#cal"/></svg></i></div>
                  <div class="date"><span>01-01-2022</span><i><svg viewBox="0 0 12 12"><g id="cal"><rect x="1" y="1" width="9.500" height="9.500" rx="2"/><path d="M1 4h9.500M3 6h5.500M3 8h4"/></g></svg></i></div>
                </div>
                <div class="sl-track"><i></i><b></b></div>
              </div>
              <div class="namecard"><strong>ABBY&nbsp; RANA</strong><em>First full name</em></div>
            </div>
          </div>
        </div>
      </div>
      <aside class="filters">
        <svg class="f-ch" viewBox="0 0 11 11"><use href="#dblR" transform="rotate(180 5.500 5.500)"/></svg>
        <svg class="f-ico" viewBox="0 0 10 12"><path d="M9.500 0v11M6 2v7M2.500 4.500v3" /></svg>
        <span>Filters</span>
      </aside>
    </div>
    <div class="tabs">
      <div class="modes">
        <svg class="desk" viewBox="0 0 20 20"><rect x="1" y="1" width="18" height="14" rx="2"/><path d="M7 15v3M13 15v3M4.500 18.500h11"/></svg>
        <svg class="phone" viewBox="0 0 14 23"><rect x="1" y="1" width="11.500" height="20.500" rx="2"/><path d="M5 18h3.500"/></svg>
        <svg class="tri" viewBox="0 0 8 12"><path d="M6.500 1v9L1.500 5.500z"/></svg>
        <svg class="tri t2" viewBox="0 0 8 12"><path d="M1.500 1v9l5-4.500z"/></svg>
      </div>
      <span class="tab t-ex">excu dash</span><span class="tab t-map">MAP</span><span class="tab t-prod">PRODUCT DETAILS</span><span class="tab t-cust on">CUSTOMER DETAIL<i>x</i></span><span class="tab t-p1">Page 1</span><span class="tab-add">+</span>
    </div>
  </div>

  <aside class="panel build">
    <div class="phead"><h2>Build</h2><svg class="d3"><use href="#dots3"/></svg><svg class="d2"><use href="#dblR"/></svg></div>
    <h3>Suggestions</h3>
    <div class="vis-grid" id="visuals"></div>
    <h3 class="h-data">Data</h3>
    <div class="drop"><div class="add">+Add data</div></div>
  </aside>

  <aside class="panel data">
    <div class="phead"><h2>Data</h2><svg class="d3"><use href="#dots3"/></svg><svg class="d2"><use href="#dblR"/></svg></div>
    <div class="search"><svg viewBox="0 0 19 19"><circle cx="8" cy="7.500" r="6.500"/><path d="M12.500 12.500l6 5.500"/></svg>Search</div>
    <ul class="fields" id="fields"></ul>
  </aside>

  <aside class="toolrail">
    <div class="tile sel"><svg viewBox="0 0 26 26"><ellipse cx="13" cy="5.500" rx="9" ry="3.500"/><path d="M4 5.500v15c0 4.700 18 4.700 18 0v-15"/></svg></div>
    <div class="tile sel"><svg viewBox="0 0 26 26"><path d="M13 23H3V11h6M9 23V2h7v8M16 7h6v3"/><g stroke="#e8a857"><ellipse cx="19.500" cy="13" rx="5" ry="2"/><path d="M14.500 13v9c0 2.500 10 2.500 10 0v-9"/></g></svg></div>
    <div class="tile"><svg viewBox="0 0 26 26"><path d="M3 20V11h6M9 18V2h7v8M16 7h6v2M24 9l-9 9-2-2 9-8z"/><path fill="#1673c8" stroke="#4aa3e6" d="M5 23c4 0 3-7 8-6 4 2 1 8-8 6z"/></svg></div>
    <div class="tile"><svg viewBox="0 0 26 26"><path d="M6 3h13v21l-6.500-5L6 24z"/></svg></div>
    <div class="tile"><svg viewBox="0 0 26 26"><path stroke-width="2" d="M13 2v22M2 13h22"/></svg></div>
    <div class="rail-foot"><svg viewBox="0 0 18 14"><path d="M2 14V5L1 3l3-2 3 3h4l3-3 3 2-1 2v9"/></svg></div>
  </aside>
</main>

<footer class="status">
  <span>Page 4 of 5</span>
  <b>-</b><div class="zoomline"><i></i><u></u></div><b class="plus">+</b><em>80%</em>
  <svg viewBox="0 0 18 14"><rect x="1" y="1" width="15.500" height="12" rx="2"/><path d="M4.500 5v4h3M13 5v4h-3"/></svg>
</footer>
<div class="tooltip">Show desktop</div>
<script src="script.js"></script>
</body>
</html>
```
FILE: styles.css
```css
* { box-sizing: border-box; }
body { margin: 0; width: 1919px; height: 1017px; overflow: hidden; background: #141414; color: #fff; font: 15px/1.2 "Open Sans", "Noto Sans", sans-serif; letter-spacing: -0.025em; display: flex; flex-direction: column; position: relative; }
h2, h3, h6, ul { margin: 0; padding: 0; list-style: none; }
em, i, u { font-style: normal; text-decoration: none; }
svg { display: block; overflow: visible; flex: none; }
svg text { letter-spacing: 0; }
.defs { position: absolute; width: 0; height: 0; overflow: hidden; visibility: hidden; }

/* visual icon strokes */
.w, .n { fill: none; stroke: #c4c4c4; stroke-width: 1.2; }
.l { fill: none; stroke: #4aa3e6; stroke-width: 1.4; }
.b { fill: #0063b1; stroke: #4aa3e6; stroke-width: 1; }
.gf { fill: #555; stroke: #8c8c8c; stroke-width: 1; }
.o { fill: none; stroke: #d0d0d0; stroke-width: 1.6; }
.o.dimline { stroke: #a0a0a0; }

.titlebar { height: 40px; flex: none; display: flex; align-items: center; padding: 4px 0 0 20px; color: #e0e0e0; }
.titlebar svg { fill: none; stroke: #d8d8d8; stroke-width: 1.3; }
.tb-save { width: 20px; height: 20px; }
.titlebar .tb-save { stroke-width: 1.8; }
.tb-undo { width: 17px; height: 19px; margin-left: 20px; }
.titlebar .tb-undo { stroke: #666; }
.tb-redo { margin-left: 20px; }
.doc-name { margin-left: 12px; width: 331px; white-space: nowrap; font-size: 14.8px; letter-spacing: -0.22px; padding-top: 5px; }
.tb-drop { width: 12px; height: 8px; margin: -2px 0 0 8px; }
.signin { margin-left: auto; font-size: 14.8px; letter-spacing: -0.2px; margin-top: -2px; }
.avatar { width: 25px; height: 25px; margin: -3px 41px 0 13px; }
.avatar .disc { fill: #3a3a3a; stroke: none; }
.win { width: 14px; height: 14px; margin-top: 2px; }
.win-min { margin-right: 40px; }
.win-max { margin-right: 41px; }
.win-close { margin-right: 19px; }

.menubar { height: 48px; flex: none; display: flex; align-items: flex-start; font-size: 17.5px; letter-spacing: -0.48px; color: #d6d6d6; padding: 11px 6px 0 28px; white-space: nowrap; }
.menubar a { height: 29px; padding-top: 1px; }
.m-file { width: 68px; }
.m-home { width: 48px; margin-right: 29px; }
.menubar .on { color: #fff; font-weight: 700; border-bottom: 2px solid #2aac94; letter-spacing: -1.1px; }
.m-insert { width: 73px; } .m-model { width: 104px; } .m-view { width: 65px; } .m-opt { width: 100px; }
.share { margin: -3px 0 0 auto; width: 105px; height: 30px; border: 0; border-radius: 4px; background: #0f6b5c; color: #c4d8d3; font: inherit; font-size: 15px; letter-spacing: -0.4px; display: flex; align-items: center; padding: 0 0 0 9px; }
.share svg { fill: none; stroke: #c4d8d3; stroke-width: 1.5; }
.share-ico { width: 19px; height: 18px; margin-right: 11px; }
.share-ch { width: 12px; height: 8px; margin-left: 6px; }

.ribbon { height: 125px; flex: none; margin: 0 9px 0 10px; background: #292929; border-radius: 12px; display: flex; padding: 5px 0; position: relative; z-index: 2; box-shadow: 0 2px 6px rgba(0,0,0,.35); }
.group { border-right: 1px solid #404040; display: flex; flex-direction: column; justify-content: space-between; }
.group h6 { font-size: 13px; font-weight: 400; -webkit-text-stroke: .25px; letter-spacing: -0.5px; text-align: center; height: 21px; line-height: 17px; }
.tools { display: flex; }
.g-clip { width: 201px; } .g-data { width: 459px; } .g-query { width: 145px; } .g-insert { width: 511px; } .g-calc { width: 233px; } .g-sens { width: 92px; } .g-share { width: 73px; } .g-cop { width: 74px; }
.g-data .tools { padding-left: 6px; } .g-query .tools { padding-left: 11px; } .g-insert .tools { padding-left: 7px; } .g-calc .tools { padding-left: 9px; }
.btn { display: flex; flex-direction: column; align-items: center; padding-top: 3px; }
.btn > svg { width: 38px; height: 42px; }
.btn b { font-weight: 400; font-size: 14.6px; line-height: 20px; letter-spacing: -0.46px; text-align: center; white-space: nowrap; margin-top: 3px; -webkit-text-stroke: .2px; }
.btn.off b { color: #5c5c5c; }
.ch { display: inline-block; width: 8px; height: 8px; margin-left: 2px; color: #d0d0d0; }
.off .ch { color: #777; }
.w50 { width: 50px; } .w56 { width: 56px; } .w57 { width: 57px; } .w58 { width: 58px; } .w60 { width: 60px; } .w61 { width: 61px; } .w62 { width: 62px; } .w67 { width: 67px; } .w68 { width: 68px; } .w70 { width: 72px; } .w80 { width: 80px; } .w90 { width: 91px; }
.g-data .w70 { width: 70px; }
.b-paste { width: 44px; margin-left: 13px; }
.b-paste > svg { margin-left: 3px; }
.clip-list { margin: 5px 0 0 8px; font-size: 15px; color: #5c5c5c; letter-spacing: -0.42px; white-space: nowrap; }
.clip-list li { display: flex; align-items: center; height: 32.500px; gap: 5px; }
.clip-list li svg { width: 20px; height: 20px; fill: none; stroke-width: 1.4; }
.clip-list li:first-child { height: 30px; margin-top: -6px; margin-bottom: 1px; }
.gallery { width: 317px; height: 76px; margin: 8px 0 0 1px; border: 1px solid #6a6a6a; border-radius: 4px; display: flex; }
.gal-grid { width: 296px; padding: 9px 0 0 8px; display: grid; grid-template-columns: repeat(9, 32.450px); grid-auto-rows: 37px; border-right: 1px solid #6a6a6a; }
.gal-grid svg { width: 20px; height: 20px; }
.gal-drop { flex: 1; display: grid; place-items: center; padding-top: 8px; }
.gal-drop .ch { margin: 0; }
.after-gal { margin-left: 5px; }
.collapse { width: 12px; height: 8px; margin: 99px 10px 0 auto; fill: none; stroke: #d8d8d8; stroke-width: 2; }

.body { height: 777px; flex: none; display: flex; }
.viewrail { width: 51px; border-right: 1px solid #333; display: flex; flex-direction: column; align-items: center; padding-top: 11px; gap: 26px; position: relative; }
.viewrail svg { width: 24px; height: 24px; fill: none; stroke: #b8b8b8; stroke-width: 1.4; }
.viewrail text { fill: #d8d8d8; stroke: none; font-weight: 600; }
.active-bar { position: absolute; left: 0; top: 0; width: 3px; height: 50px; background: #2aac94; }

.centre { width: 1376px; display: flex; flex-direction: column; }
.stage { height: 733px; background: #fff; display: flex; }
.page { width: 1290px; height: 725px; margin-left: 23px; border: 2px dotted #555; border-top: 0; display: flex; }
.strip { width: 49px; height: 723px; margin-left: -1px; background: #000; border: 1px solid #1d5fa8; padding-left: 3px; display: flex; flex-direction: column; }
.strip svg { fill: #fff; }
.strip .s-back { width: 28px; height: 30px; margin: 13px 0 0 11px; fill: none; stroke: #fff; stroke-width: 2.8; }
.s-filter { width: 38px; height: 34px; margin-top: 14px; }
.s-chart { width: 37px; height: 37px; margin-top: 321px; }
.s-globe { width: 37px; height: 37px; margin-top: 25px; }
.s-box { width: 37px; height: 28px; margin-top: 27px; }
.s-users { width: 37px; height: 31px; margin-top: 29px; }

.visuals { width: 1238px; }
.row-top { display: flex; height: 277px; }
.cards { width: 276px; padding-left: 3px; }
.kpi { width: 269px; height: 113px; border: 1px solid #1d6ab8; border-radius: 30px; background: #000; display: flex; flex-direction: column; align-items: center; }
.kpi strong { font-weight: 400; font-size: 60px; letter-spacing: -2.3px; line-height: 70px; color: #33e1f7; margin-top: 7px; -webkit-text-stroke: .4px; }
.kpi em { font-size: 15.200px; letter-spacing: -0.12px; line-height: 18px; height: 13px; overflow: hidden; display: flex; align-items: center; margin-top: 4px; }
.kpi.two { height: 112px; margin-top: 13px; }
.kpi.two strong { margin-top: 13px; }
.kpi.two em { height: 18px; margin-top: 2px; letter-spacing: 0; }
.trend { width: 962px; height: 277px; font-size: 12px; fill: #605e5c; }
.ttl { font: 400 15.800px Roboto, sans-serif; fill: #252423; stroke: #252423; stroke-width: .2px; }
.donuts .ttl { fill: #333; font-size: 16px; }
.grid path { fill: none; stroke: #cfcfcf; stroke-dasharray: 1.500 4; }
.yl text { text-anchor: end; font-size: 12px; fill: #333; letter-spacing: -0.3px; }
.xl text { text-anchor: middle; font-size: 11.800px; letter-spacing: -0.25px; }
.lg { font-size: 12.800px; }
.series polyline { fill: none; stroke-width: 2.800; stroke-linejoin: round; vector-effect: non-scaling-stroke; }

.row-bottom { display: flex; }
.donuts { width: 330px; }
.donuts svg { background: #b3b3b3; width: 330px; }
.donut-1 { height: 204px; } .donut-2 { height: 229px; margin-top: 12px; }
.dl { font-size: 11.300px; fill: #222; }
.lead { fill: none; stroke: #888; }

.tablewrap { width: 400px; margin-left: 20px; color: #252423; font-size: 13px; }
.tablewrap span { display: block; white-space: nowrap; }
.thead, .tfoot, .tr { display: flex; }
.thead { height: 35px; border-bottom: 1px solid #118dff; padding-top: 9px; font-size: 13px; letter-spacing: -0.1px; }
.c-key { width: 84px; text-align: right; }
.c-name { width: 181px; padding-left: 10px; }
.c-ord { width: 39px; text-align: right; position: relative; }
.c-rev { width: 91px; text-align: right; position: relative; }
.thead .c-ord { text-align: left; letter-spacing: -0.3px; }
.thead .c-rev { text-align: left; padding-left: 10px; }
.sort { position: absolute; left: 0; top: 17px; border: 4.500px solid transparent; border-top: 4.500px solid #222; border-bottom: 0; }
.tbody { height: 386.500px; overflow: hidden; }
.tr { height: 21.100px; line-height: 20px; font-size: 12.800px; }
.tr:nth-child(even) { background: linear-gradient(#e2e2e2 1px, #ebebeb 1px); }
.tr .c-key { letter-spacing: -0.12px; }
.tr .c-name { letter-spacing: 0.05px; }
.tr .c-rev { letter-spacing: -0.22px; }
.tr u { position: absolute; left: 0; top: 1.500px; height: 18px; background: #666; border-left: 1px dotted #111; }
.tr .c-rev u { left: 10px; background: #a0d1ff; }
.tr s { position: relative; text-decoration: none; }
.tfoot { border-top: 1px solid #118dff; font-weight: 700; font-size: 13px; padding-top: 2px; letter-spacing: -0.1px; }
.tfoot .c-rev { padding-left: 6px; letter-spacing: 0.1px; }
.vscroll { width: 7px; height: 78px; border-radius: 4px; background: #b3b0ad; margin: 6px 0 0 43px; }
.rightcol { width: 416px; margin-left: 10px; }
.slicer { height: 130px; background: #cbcbcb; border: 1px solid #e1e1e1; padding: 5px 8px 0 12px; color: #252423; }
.sl-head { display: flex; justify-content: space-between; font: 400 10.500px/13px Roboto, sans-serif; letter-spacing: .1px; height: 19px; -webkit-text-stroke: .15px; }
.sl-head svg { width: 10px; height: 7px; margin: 1px 4px 0 0; fill: none; stroke: #605e5c; }
.sl-inputs { display: flex; gap: 5px; }
.date { width: 97px; height: 28px; border: 1.500px solid #555; display: flex; font-size: 12.500px; letter-spacing: -0.2px; align-items: center; }
.date span { width: 75px; padding-left: 8px; }
.date i { width: 20px; height: 26px; display: grid; place-items: center; }
.date svg { width: 12px; height: 12px; fill: none; stroke: #605e5c; stroke-width: .9; }
.date.dim { color: #999; } .date.dim i { background: #f3f2f1; } .date.dim svg { opacity: .3; }
.sl-track { display: flex; align-items: center; margin: 8px 0 0 13px; height: 26px; }
.sl-track i { width: 357px; height: 3px; background: #605e5c; }
.sl-track b { width: 26px; height: 26px; border: 1.500px solid #605e5c; border-radius: 50%; background: #fff; }
.namecard { display: flex; flex-direction: column; align-items: center; padding-top: 40px; }
.namecard strong { font: 400 53px/64px Roboto, sans-serif; letter-spacing: .7px; color: #252423; white-space: nowrap; -webkit-text-stroke: .6px; }
.namecard em { font-size: 15.500px; letter-spacing: -0.25px; color: #605e5c; margin-top: 1px; }

.filters { width: 40px; margin-left: 23px; border-left: 1px solid #a6a6a6; color: #252423; display: flex; flex-direction: column; align-items: center; padding-top: 17px; }
.f-ch { width: 11px; height: 11px; }
.f-ico { width: 10px; height: 12px; margin: 24px 0 0 6px; fill: none; stroke: #333; stroke-width: 1.400; }
.filters span { writing-mode: vertical-rl; font-weight: 600; font-size: 17px; margin-top: 13px; letter-spacing: 0.35px; }

.tabs { height: 44px; background: #292929; display: flex; font-size: 14.500px; letter-spacing: -0.2px; }
.modes { width: 160px; border-right: 1px solid #666; display: flex; padding: 9px 0 0 18px; }
.modes svg { fill: none; stroke: #fff; stroke-width: 1.800; }
.modes .tri { stroke: #b8b8b8; stroke-width: 1.100; width: 7px; height: 11px; margin: 7px 0 0 28px; }
.modes .t2 { margin-left: 19px; }
.desk { width: 20px; height: 20px; }
.modes .phone { width: 14px; height: 23px; margin: -2px 0 0 38px; }
.modes::before { content: ""; position: absolute; width: 30px; height: 4px; border-radius: 2px; background: #2aac94; margin: 26px 0 0 -5px; }
.tab { border-right: 1px solid #444; display: flex; align-items: center; justify-content: center; position: relative; white-space: nowrap; padding-top: 1px; }
.t-ex { width: 117px; } .t-map { width: 82px; } .t-prod { width: 175px; } .t-cust { width: 181px; } .t-p1 { width: 95px; border: 0; }
.t-ex, .t-p1 { letter-spacing: -0.3px; }
.tab.on { font-weight: 700; letter-spacing: -0.3px; box-shadow: inset 0 -5px #2aac94; }
.tab.on i { position: absolute; right: 5px; top: 4px; font-size: 12.500px; }
.tab-add { width: 49px; background: #2aac94; color: #222; display: grid; place-items: center; font: 700 24px/1 "Open Sans", sans-serif; padding-bottom: 4px; }

.panel { width: 226px; border-left: 1px solid #555; padding: 0 9px 0 10px; }
.phead { display: flex; align-items: center; height: 50px; }
.phead h2 { font-size: 20px; letter-spacing: -0.8px; flex: 1; }
.d3 { width: 14px; height: 4px; margin: -5px 14px 0 0; }
.d2 { width: 11px; height: 11px; color: #d8d8e8; margin: -5px 3px 0 0; }
.panel h3 { font-weight: 400; font-size: 14.800px; letter-spacing: -0.2px; line-height: 18px; margin-top: -2px; }
.vis-grid { margin-top: 6px; height: 267px; width: 205px; background: #000; border: 1px solid #8a8a8a; border-radius: 3px; display: grid; grid-template-columns: repeat(6, 32.400px); grid-auto-rows: 32.400px; padding: 7px 0 0 9px; }
.vis-grid svg { width: 23px; height: 23px; }
.panel h3.h-data { margin-top: 11px; }
.drop { margin-top: 6px; width: 205px; height: 49px; border: 1px dashed #aaa; background: #292929; padding: 5px; }
.add { height: 37px; border: 1px solid #b0b0b0; border-radius: 2px; display: grid; place-items: center; font-weight: 700; font-size: 14.500px; letter-spacing: -0.35px; }
.panel.data { padding: 0 5px 0 5px; }
.data .phead { padding: 0 4px 0 5px; }
.search { height: 30px; margin-top: 7px; border: 1px solid #666; border-bottom-color: #aaa; border-radius: 4px; background: #222; color: #999; display: flex; align-items: center; font-size: 17px; letter-spacing: -0.4px; gap: 8px; padding-left: 15px; }
.search svg { width: 18px; height: 18px; fill: none; stroke: #999; stroke-width: 1.300; }
.fields { margin-top: 12px; }
.fields li { height: 30px; display: flex; align-items: center; font-size: 14.800px; letter-spacing: -0.33px; white-space: nowrap; -webkit-text-stroke: .15px; }
.fields .fc { width: 11px; height: 11px; margin: 0 8px 0 12px; transform: rotate(-90deg); color: #ddd; }
.fields .fi { width: 18px; height: 18px; margin-right: 4px; }
.toolrail { width: 40px; background: #292929; border-left: 1px solid #555; display: flex; flex-direction: column; }
.tile { height: 40px; background: #1f1f1f; display: grid; place-items: center; }
.tile.sel { background: #292929; border: 1px solid #6a6a6a; }
.tile svg { width: 24px; height: 24px; fill: none; stroke: #c8c8c8; stroke-width: 1.500; }
.rail-foot { margin-top: auto; height: 40px; background: #1f1f1f; border-top: 1px solid #555; padding: 7px 0 0 12px; }
.rail-foot svg { width: 18px; height: 14px; fill: none; stroke: #d8d8d8; stroke-width: 1.500; }

.status { height: 27px; flex: none; border-top: 1px solid #666; display: flex; align-items: center; color: #d0d0d0; padding: 4px 22px 0 5px; font-size: 14.500px; letter-spacing: -0.1px; }
.status > span { flex: 1; padding-top: 2px; }
.status b { font-size: 17px; line-height: 14px; margin-top: -4px; }
.zoomline { width: 125px; height: 13px; margin: -2px 7px 0 5px; background: linear-gradient(#d0d0d0, #d0d0d0) 0 6px / 100% 1px no-repeat; display: flex; align-items: center; }
.zoomline i { width: 5px; height: 13px; background: #d0d0d0; margin-left: 46px; }
.zoomline u { width: 1px; height: 7px; background: #d0d0d0; margin-left: 11px; }
.status em { margin: 0 25px 0 17px; width: 29px; }
.status svg { width: 18px; height: 14px; fill: none; stroke: #d0d0d0; stroke-width: 1.400; }
.tooltip { position: absolute; left: 1801px; top: 966px; width: 122px; height: 38px; background: #2c2c2c; border-radius: 6px; box-shadow: 0 0 4px #000a; padding: 9px 0 0 11px; font-size: 15px; letter-spacing: -0.25px; white-space: nowrap; z-index: 3; }
```
FILE: script.js
```js
const icon = (id, cls = "") => `<svg class="${cls}"><use href="#${id}"/></svg>`;

document.getElementById("gallery").innerHTML =
  "barStack colStack barClust colClust comboStack comboClust line area slicer pie donutG treemap globe gauge card multi table matrix"
    .split(" ").map(id => icon(id)).join("");

document.getElementById("visuals").innerHTML =
  ("barStack colStack barClust colClust bar100 col100 line area areaStack area100 comboStack comboClust " +
   "ribbonC waterfall funnelC scatter pie donut treemap globe mapFill mapLine azure gauge " +
   "card multi kpi slicer table matrix rvis pyvis keyInf decomp qna narr " +
   "trophy pagrep boltCard boltSlice boltList arc papps pauto more")
    .split(" ").map(id => icon(id)).join("");

// key, name, orders, orders bar px, revenue, revenue bar px
const customers = [
  [11091, "MR.DALTON PEREZ", 26, 39, "$1,513.14", 11],
  [11223, "MRS.HAILEY PATTERSON", 26, 39, "$1,615.66", 11],
  [11300, "MR.FERNANDO BARNES", 26, 39, "$1,839.01", 12],
  [11330, "MR.RYAN THOMPSON", 26, 39, "$1,596.61", 11],
  [11331, "MRS.SAMANTHA JENKINS", 26, 39, "$1,739.58", 11.5],
  [11185, "MRS.ASHLEY HENDERSON", 25, 37, "$1,716.76", 11.5],
  [11200, "MR.JASON GRIFFIN", 25, 37, "$1,613.88", 11],
  [11176, "MR.MASON ROBERTS", 24, 36, "$1,526.03", 11],
  [11262, "MRS.JENNIFER SIMMONS", 24, 36, "$1,464.79", 10],
  [11277, "MR.CHARLES JACKSON", 24, 36, "$1,776.69", 12],
  [11287, "MR.HENRY GARCIA", 24, 36, "$1,442.96", 10],
  [11566, "MS.APRIL SHAN", 24, 36, "$1,424.49", 10],
  [11711, "MR.DANIEL DAVIS", 24, 36, "$1,403.85", 10],
  [11276, "MRS.NANCY CHAPMAN", 23, 34.5, "$1,111.23", 7.5],
  [11203, "MR.LUIS DIAZ", 17, 25, "$1,002.05", 6.5],
  [11215, "MRS.ANA PERRY", 17, 25, "$1,335.85", 9],
  [11078, "MS.GINA MARTIN", 16, 24.5, "$991.27", 6.5],
  [11211, "MRS.SAMANTHA RUSSELL", 16, 24.5, "$947.96", 6.5],
  ["", "", "", 24.5, "", 6],
];
document.getElementById("rows").innerHTML = customers.map(([k, n, o, ow, r, rw]) =>
  `<div class="tr"><span class="c-key">${k}</span><span class="c-name">${n}</span>` +
  `<span class="c-ord"><u style="width:${ow}px"></u><s>${o}</s></span>` +
  `<span class="c-rev"><u style="width:${rw}px"></u><s>${r}</s></span></div>`).join("");

const fields = [
  ["meas", "measure table"], ["tbl", "Calendar Lookup"], ["tbl", "Customer Lookup"],
  ["tblCalc", "Parameter"], ["tblCalc", "Parameter 2"], ["tblCalc", "Parameter 3"],
  ["tblCalc", "PRICE ADJUSTMENT"], ["tbl", "Product Categories Lo..."], ["tbl", "Product Lookup"],
  ["tbl", "Product Subcategorie..."], ["tbl", "Returns Data"], ["tbl", "Sales Data"], ["tbl", "Territory Lookup"],
];
document.getElementById("fields").innerHTML = fields.map(([i, n]) =>
  `<li>${icon("chev", "fc")}${icon(i, "fi")}<span>${n}</span></li>`).join("");
```
